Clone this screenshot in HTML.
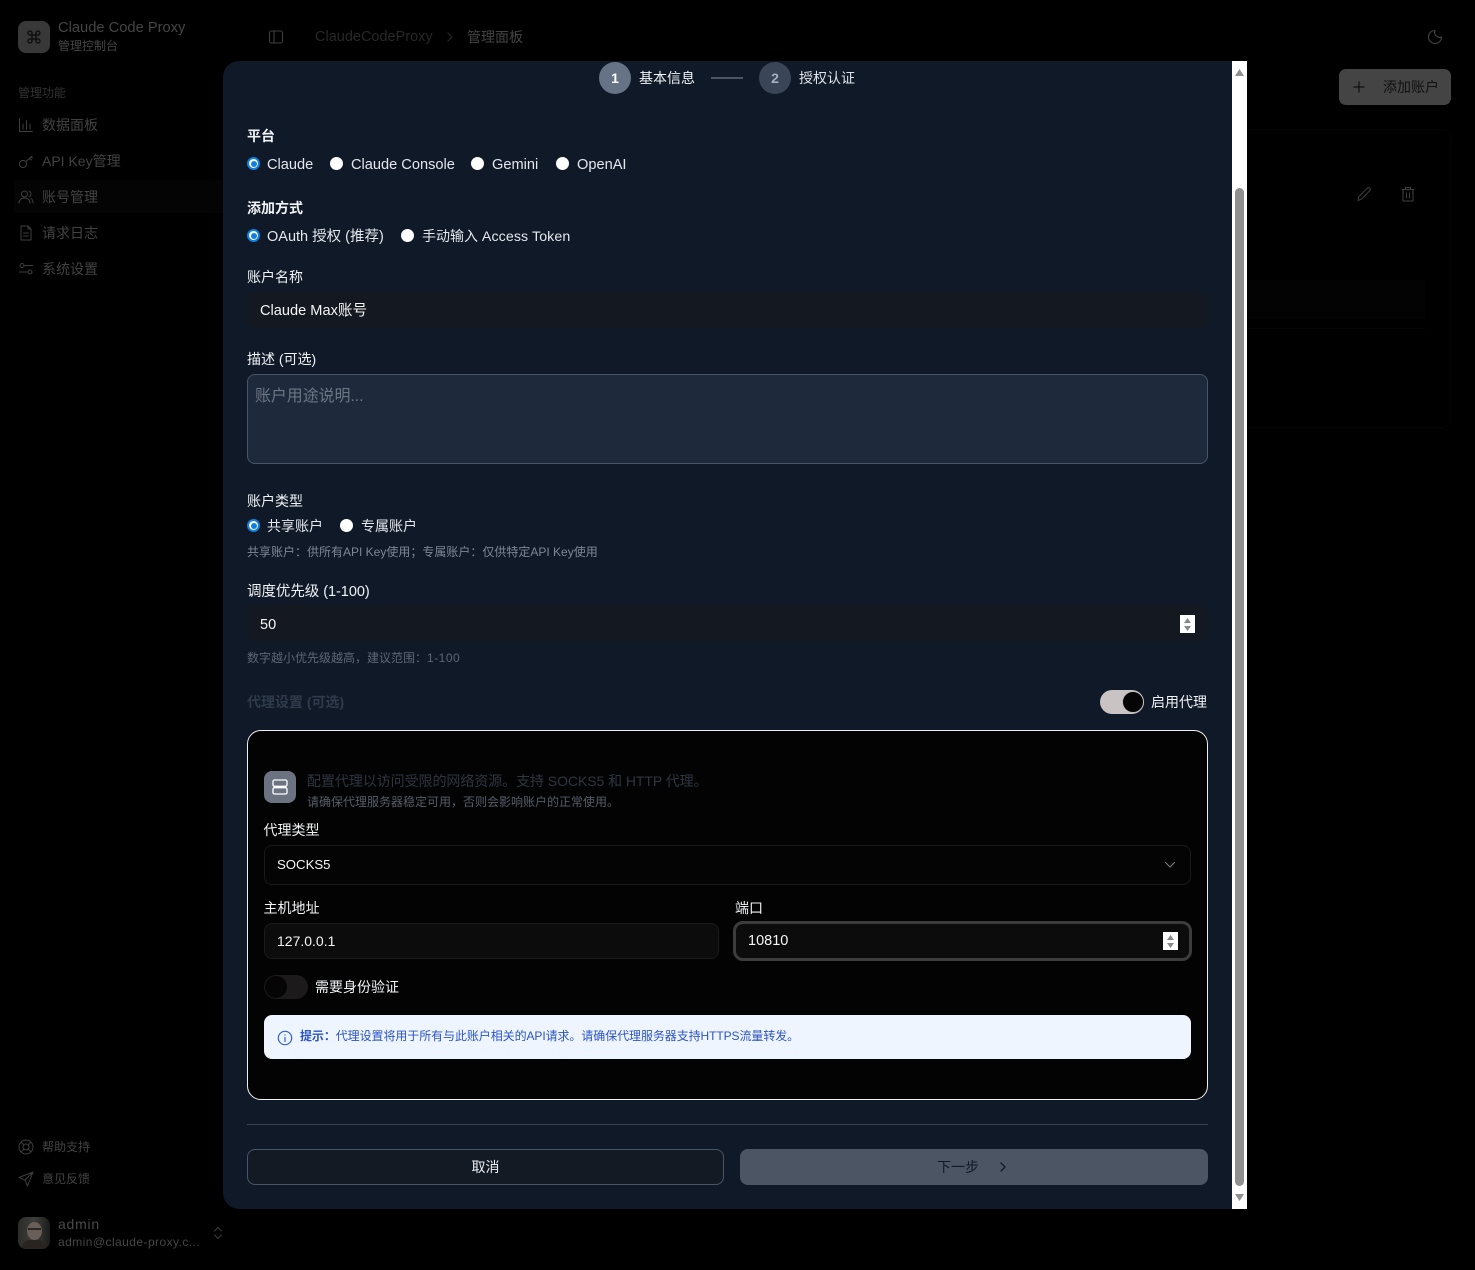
<!DOCTYPE html>
<html lang="zh"><head><meta charset="utf-8"><title>Claude Code Proxy</title>
<style>
*{box-sizing:border-box;margin:0;padding:0}
html,body{width:1475px;height:1270px;overflow:hidden;background:#000}
body{position:relative;font-family:"Liberation Sans","Noto Sans CJK SC",sans-serif;font-size:14px;color:#e5e7eb}
.t{position:absolute;white-space:nowrap;line-height:20px}
.b{position:absolute}
.s{color:#424242}
.l{color:#f1f3f5;font-size:14px}
.r{position:absolute;width:13px;height:13px;border-radius:50%;background:#fff}
.r.on{background:#fff;border:2px solid #0f7fe0}
.r.on:after{content:"";position:absolute;left:1.500px;top:1.500px;width:6px;height:6px;border-radius:50%;background:#0f7fe0}
svg{position:absolute;fill:none;stroke-linecap:round;stroke-linejoin:round}
</style></head><body>

<!-- sidebar -->
<div class="b" style="left:18px;top:21px;width:32px;height:32px;border-radius:8px;background:#383838"></div>
<svg style="left:26px;top:29px" width="16" height="16" viewBox="0 0 24 24" stroke="#101010" stroke-width="2.2"><path d="M15 6v12a3 3 0 1 0 3-3H6a3 3 0 1 0 3 3V6a3 3 0 1 0-3 3h12a3 3 0 1 0-3-3"/></svg>
<div class="t" style="left:58px;top:18px;font-size:14.700px;color:#454545">Claude Code Proxy</div>
<div class="t" style="left:58px;top:36px;font-size:12px;color:#454545">管理控制台</div>
<div class="t" style="left:18px;top:83px;font-size:12px;color:#333">管理功能</div>

<div class="b" style="left:14px;top:180px;width:209px;height:33px;background:#050404"></div>

<svg style="left:18px;top:117px" width="16" height="16" viewBox="0 0 16 16" stroke="#3e3e3e" stroke-width="1"><path d="M1.500 1.500V14.500H14.500M5 12V7M8.500 12V3.500M12 12V7"/></svg>
<div class="t s" style="left:42px;top:115px">数据面板</div>
<svg style="left:18px;top:153px" width="16" height="16" viewBox="0 0 16 16" stroke="#3e3e3e" stroke-width="1"><circle cx="5" cy="11" r="3.600"/><path d="M8 8.500 14 3M11.500 5.500l2 1.500M13 4l1.500 1"/></svg>
<div class="t s" style="left:42px;top:151px">API Key管理</div>
<svg style="left:18px;top:189px" width="16" height="16" viewBox="0 0 16 16" stroke="#3e3e3e" stroke-width="1"><circle cx="6.500" cy="5" r="3"/><path d="M1 14c0-3 2.400-5 5.500-5s5.500 2 5.500 5M11 2.200a3 3 0 0 1 0 5.600M13 9.500c1.300.8 2 2.300 2 4.500"/></svg>
<div class="t s" style="left:42px;top:187px">账号管理</div>
<svg style="left:18px;top:225px" width="16" height="16" viewBox="0 0 16 16" stroke="#3e3e3e" stroke-width="1"><path d="M10 1H3v14h10V4zM10 1v3h3M5.500 8h5M5.500 11h5"/></svg>
<div class="t s" style="left:42px;top:223px">请求日志</div>
<svg style="left:18px;top:261px" width="16" height="16" viewBox="0 0 16 16" stroke="#3e3e3e" stroke-width="1"><circle cx="4" cy="4.500" r="2"/><circle cx="12" cy="11" r="2"/><path d="M7 4.500h7.500M1.500 11H9"/></svg>
<div class="t s" style="left:42px;top:259px">系统设置</div>

<svg style="left:18px;top:1139px" width="16" height="16" viewBox="0 0 16 16" stroke="#3e3e3e" stroke-width="1"><circle cx="8" cy="8" r="7"/><circle cx="8" cy="8" r="3"/><path d="M3 3l3 3M13 3l-3 3M3 13l3-3M13 13l-3-3"/></svg>
<div class="t s" style="left:42px;top:1137px;font-size:12px">帮助支持</div>
<svg style="left:18px;top:1171px" width="16" height="16" viewBox="0 0 16 16" stroke="#3e3e3e" stroke-width="1"><path d="M15 1 1 6.500 7 9l2.500 6zM7 9l8-8"/></svg>
<div class="t s" style="left:42px;top:1169px;font-size:12px">意见反馈</div>

<div class="b" style="left:18px;top:1217px;width:32px;height:32px;border-radius:8px;overflow:hidden;background:linear-gradient(90deg,#2c2c2a,#3d3d3b 50%,#1c1c1c)">
  <div class="b" style="left:9px;top:5px;width:15px;height:18px;border-radius:50%;background:#6a5f58"></div>
  <div class="b" style="left:10px;top:11px;width:13px;height:2px;background:#2a2725"></div>
  <div class="b" style="left:4px;top:23px;width:24px;height:12px;border-radius:8px 8px 0 0;background:#2a2421"></div>
</div>
<div class="t" style="left:58px;top:1214px;font-size:14px;color:#4a4a4a;letter-spacing:.75px">admin</div>
<div class="t" style="left:58px;top:1232px;font-size:12px;color:#464646;letter-spacing:.44px">admin@claude-proxy.c...</div>
<svg style="left:211px;top:1225px" width="14" height="16" viewBox="0 0 14 16" stroke="#3e3e3e" stroke-width="1"><path d="M3.500 6 7 2.500 10.500 6M3.500 10 7 13.500 10.500 10"/></svg>

<!-- top bar -->
<svg style="left:268px;top:29px" width="16" height="16" viewBox="0 0 16 16" stroke="#3e3e3e" stroke-width="1.100"><rect x="1.500" y="2" width="13" height="12" rx="2"/><path d="M6 2v12"/></svg>
<div class="t" style="left:315px;top:27px;color:#282828;font-size:14.500px">ClaudeCodeProxy</div>
<svg style="left:445px;top:31px" width="10" height="12" viewBox="0 0 10 12" stroke="#2c2c2c" stroke-width="1"><path d="M3 2l4 4-4 4"/></svg>
<div class="t" style="left:467px;top:27px;color:#434343">管理面板</div>
<svg style="left:1427px;top:29px" width="16" height="16" viewBox="0 0 16 16" stroke="#444" stroke-width="1.100"><path d="M8 1.500a6.500 6.500 0 1 0 6.500 6.500A5 5 0 0 1 8 1.500z"/></svg>

<!-- behind modal -->
<div class="b" style="left:1339px;top:69px;width:112px;height:36px;border-radius:7px;background:#444"></div>
<svg style="left:1352px;top:80px" width="14" height="14" viewBox="0 0 14 14" stroke="#111" stroke-width="1.200"><path d="M7 2v10M2 7h10"/></svg>
<div class="t" style="left:1383px;top:77px;color:#111">添加账户</div>
<div class="b" style="left:1247px;top:129px;width:204px;height:299px;border:1px solid #050505;border-left:0;border-radius:0 8px 8px 0"></div>
<div class="b" style="left:1247px;top:280px;width:178px;height:39px;background:#040303"></div>
<div class="b" style="left:1247px;top:328px;width:178px;height:1px;background:#060606"></div>
<svg style="left:1356px;top:186px" width="16" height="16" viewBox="0 0 16 16" stroke="#404040" stroke-width="1"><path d="M2 14.500l.8-3.800 8.500-8.500a1.700 1.700 0 0 1 2.500 2.500l-8.500 8.500z"/></svg>
<svg style="left:1400px;top:186px" width="16" height="16" viewBox="0 0 16 16" stroke="#404040" stroke-width="1"><path d="M2 3.500h12M5.500 3.500V1.500h5v2M3 3.500v11.500h10V3.500M6.500 7v5M9.500 7v5"/></svg>

<!-- modal -->
<div class="b" style="left:223px;top:61px;width:1010px;height:1148px;background:#0f1928;border-radius:16px 0 0 16px"></div>

<!-- scrollbar -->
<div class="b" style="left:1232px;top:61px;width:15px;height:1148px;background:#fff"></div>
<div class="b" style="left:1235px;top:188px;width:9px;height:998px;background:#8f8f8f;border-radius:5px"></div>
<div class="b" style="left:1235px;top:69px;width:9px;height:7px;background:#8f8f8f;clip-path:polygon(50% 0,100% 100%,0 100%)"></div>
<div class="b" style="left:1235px;top:1194px;width:9px;height:7px;background:#8f8f8f;clip-path:polygon(0 0,100% 0,50% 100%)"></div>

<!-- steps -->
<div class="b" style="left:599px;top:62px;width:32px;height:32px;border-radius:50%;background:#667285"></div>
<div class="t" style="left:599px;top:68px;width:32px;text-align:center;color:#fff;font-weight:700;font-size:14px">1</div>
<div class="t l" style="left:639px;top:68px">基本信息</div>
<div class="b" style="left:711px;top:77px;width:32px;height:2px;background:#4b5563"></div>
<div class="b" style="left:759px;top:62px;width:32px;height:32px;border-radius:50%;background:#3a4658"></div>
<div class="t" style="left:759px;top:68px;width:32px;text-align:center;color:#a5afbd;font-weight:700;font-size:14px">2</div>
<div class="t l" style="left:799px;top:68px;color:#dfe3e8">授权认证</div>

<!-- platform -->
<div class="t l" style="left:247px;top:126px;font-weight:700">平台</div>
<div class="r on" style="left:247px;top:157px"></div>
<div class="t" style="left:267px;top:155px;font-size:14.600px;color:#e5e7eb">Claude</div>
<div class="r" style="left:330px;top:157px"></div>
<div class="t" style="left:351px;top:155px;font-size:14.600px;color:#e5e7eb">Claude Console</div>
<div class="r" style="left:471px;top:157px"></div>
<div class="t" style="left:492px;top:155px;font-size:14.600px;color:#e5e7eb">Gemini</div>
<div class="r" style="left:556px;top:157px"></div>
<div class="t" style="left:577px;top:155px;font-size:14.600px;color:#e5e7eb">OpenAI</div>

<!-- method -->
<div class="t l" style="left:247px;top:198px;font-weight:700">添加方式</div>
<div class="r on" style="left:247px;top:229px"></div>
<div class="t" style="left:267px;top:226px;font-size:14.500px;color:#e5e7eb;padding-top:1px">OAuth 授权 (推荐)</div>
<div class="r" style="left:401px;top:229px"></div>
<div class="t" style="left:422px;top:225px;font-size:14px;color:#e5e7eb;padding-top:1px">手动输入 <span style="font-size:14.200px;letter-spacing:.1px">Access Token</span></div>

<!-- name -->
<div class="t l" style="left:247px;top:267px">账户名称</div>
<div class="b" style="left:247px;top:292px;width:961px;height:36px;background:#131821;border-radius:8px"></div>
<div class="t" style="left:260px;top:301px;font-size:14.600px;color:#f5f5f5">Claude Max账号</div>

<!-- description -->
<div class="t l" style="left:247px;top:349px">描述 (可选)</div>
<div class="b" style="left:247px;top:374px;width:961px;height:90px;background:#1e293b;border:1px solid #475569;border-radius:8px"></div>
<div class="t" style="left:255px;top:387px;font-size:16px;color:#6b7684;letter-spacing:-.1px">账户用途说明...</div>

<!-- account type -->
<div class="t l" style="left:247px;top:491px">账户类型</div>
<div class="r on" style="left:247px;top:519px"></div>
<div class="t" style="left:267px;top:516px;color:#e5e7eb">共享账户</div>
<div class="r" style="left:340px;top:519px"></div>
<div class="t" style="left:361px;top:516px;color:#e5e7eb">专属账户</div>
<div class="t" style="left:247px;top:542px;font-size:12px;color:#7e8794">共享账户：供所有API Key使用；专属账户：仅供特定API Key使用</div>

<!-- priority -->
<div class="t l" style="left:247px;top:581px;font-size:14.500px;letter-spacing:-.05px;padding-top:1px">调度优先级 (1-100)</div>
<div class="b" style="left:247px;top:605px;width:961px;height:36px;background:#131821;border-radius:8px"></div>
<div class="t" style="left:260px;top:615px;font-size:14.500px;color:#f5f5f5">50</div>
<div class="b" style="left:1180px;top:615px;width:15px;height:18px;background:#fff"></div>
<div class="b" style="left:1184px;top:618px;width:7px;height:5px;background:#888;clip-path:polygon(50% 0,100% 100%,0 100%)"></div>
<div class="b" style="left:1184px;top:626px;width:7px;height:5px;background:#888;clip-path:polygon(0 0,100% 0,50% 100%)"></div>
<div class="t" style="left:247px;top:648px;font-size:12px;color:#5c6674">数字越小优先级越高，建议范围：<span style="letter-spacing:.5px">1-100</span></div>

<!-- proxy header -->
<div class="t" style="left:247px;top:692px;color:#2f3a4a;font-weight:700">代理设置 (可选)</div>
<div class="b" style="left:1100px;top:690px;width:44px;height:24px;border-radius:12px;background:#c9c3c3"></div>
<div class="b" style="left:1122px;top:691px;width:22px;height:22px;border-radius:50%;background:#050505;border:1px solid #bbb"></div>
<div class="t" style="left:1151px;top:692px;color:#f1f3f5">启用代理</div>

<!-- proxy box -->
<div class="b" style="left:247px;top:730px;width:961px;height:370px;background:#030304;border:1px solid #f0f0f0;border-radius:14px"></div>
<div class="b" style="left:264px;top:771px;width:32px;height:32px;border-radius:8px;background:#6b7280"></div>
<svg style="left:271px;top:778px" width="18" height="18" viewBox="0 0 18 18" stroke="#fff" stroke-width="1.300"><rect x="2" y="2" width="14" height="6.300" rx="1.500"/><rect x="2" y="9.700" width="14" height="6.300" rx="1.500"/></svg>
<div class="t" style="left:307px;top:771px;color:#2f3540;letter-spacing:-.06px">配置代理以访问受限的网络资源。支持 SOCKS5 和 HTTP 代理。</div>
<div class="t" style="left:307px;top:792px;font-size:12px;color:#565d68">请确保代理服务器稳定可用，否则会影响账户的正常使用。</div>
<div class="t l" style="left:263.500px;top:820px">代理类型</div>
<div class="b" style="left:264px;top:845px;width:927px;height:40px;background:#040405;border:1px solid #1b1b1d;border-radius:8px"></div>
<div class="t" style="left:277px;top:855px;font-size:13.200px;color:#f5f5f5">SOCKS5</div>
<svg style="left:1164px;top:860px" width="12" height="10" viewBox="0 0 12 10" stroke="#777" stroke-width="1.200"><path d="M1.500 2.500 6 7l4.500-4.500"/></svg>
<div class="t l" style="left:263.500px;top:898px">主机地址</div>
<div class="b" style="left:264px;top:923px;width:455px;height:36px;background:#0c0c0d;border:1px solid #1b1b1d;border-radius:8px"></div>
<div class="t" style="left:277px;top:931px;font-size:14px;color:#f5f5f5">127.0.0.1</div>
<div class="t l" style="left:735px;top:898px">端口</div>
<div class="b" style="left:733px;top:921px;width:459px;height:40px;background:#0c0c0d;border:3px solid #3c3c3c;border-radius:10px"></div>
<div class="t" style="left:748px;top:931px;font-size:14.500px;color:#f5f5f5">10810</div>
<div class="b" style="left:1163px;top:932px;width:15px;height:18px;background:#fff"></div>
<div class="b" style="left:1167px;top:935px;width:7px;height:5px;background:#888;clip-path:polygon(50% 0,100% 100%,0 100%)"></div>
<div class="b" style="left:1167px;top:943px;width:7px;height:5px;background:#888;clip-path:polygon(0 0,100% 0,50% 100%)"></div>
<div class="b" style="left:264px;top:975px;width:44px;height:24px;border-radius:12px;background:#1c1a1a"></div>
<div class="b" style="left:265px;top:976px;width:22px;height:22px;border-radius:50%;background:#050505"></div>
<div class="t l" style="left:315px;top:977px">需要身份验证</div>
<div class="b" style="left:264px;top:1015px;width:927px;height:44px;background:#eef5ff;border-radius:8px"></div>
<svg style="left:277px;top:1030px" width="16" height="16" viewBox="0 0 16 16" stroke="#2f5fd0" stroke-width="1.200"><circle cx="8" cy="8" r="6.700"/><path d="M8 7.500v4M8 4.800v.2"/></svg>
<div class="t" style="left:300px;top:1026px;font-size:12px;color:#2c54c5;letter-spacing:-.08px"><b>提示：</b>代理设置将用于所有与此账户相关的API请求。请确保代理服务器支持HTTPS流量转发。</div>

<!-- footer -->
<div class="b" style="left:247px;top:1124px;width:961px;height:1px;background:#3a4454"></div>
<div class="b" style="left:247px;top:1149px;width:477px;height:36px;background:#141a24;border:1px solid #475569;border-radius:8px"></div>
<div class="t" style="left:247px;top:1157px;width:477px;text-align:center;color:#eceff3">取消</div>
<div class="b" style="left:740px;top:1149px;width:468px;height:36px;background:#4b5563;border-radius:8px"></div>
<div class="t" style="left:937px;top:1157px;color:#111827">下一步</div>
<svg style="left:997px;top:1161px" width="12" height="12" viewBox="0 0 12 12" stroke="#111827" stroke-width="1.300"><path d="M4 2l4 4-4 4"/></svg>

</body></html>
